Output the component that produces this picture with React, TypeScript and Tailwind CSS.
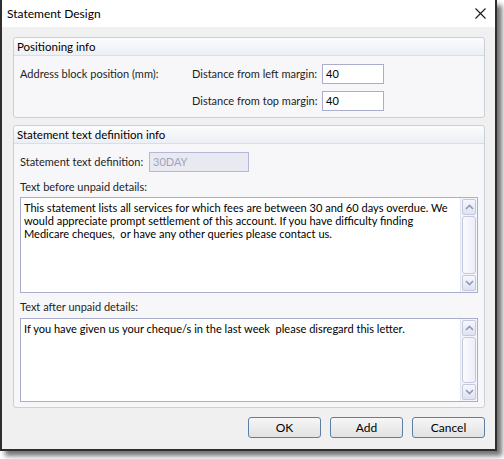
import React from 'react';

const font = { fontFamily: 'Lato, "Liberation Sans", sans-serif' };

const ScrollBar: React.FC = () => (
  <div className="w-[17px] shrink-0 flex flex-col bg-[#f4f5fa] border-l border-[#e3e5f0]">
    <div className="h-[16px] m-[1px] mb-0 rounded-[2px] border border-[#c3c8df] bg-gradient-to-b from-[#f7f8fc] to-[#dfe2ef] flex items-center justify-center">
      <svg width="9" height="6" viewBox="0 0 9 6">
        <path d="M1 5 L4.5 1.5 L8 5" fill="none" stroke="#8f98bd" strokeWidth="1.6" />
      </svg>
    </div>
    <div className="flex-1 mx-[1px] my-[1px] rounded-[3px] border border-[#c3c8df] bg-gradient-to-r from-[#fbfbfe] to-[#eceef7]" />
    <div className="h-[16px] m-[1px] mt-0 rounded-[2px] border border-[#c3c8df] bg-gradient-to-b from-[#f7f8fc] to-[#dfe2ef] flex items-center justify-center">
      <svg width="9" height="6" viewBox="0 0 9 6">
        <path d="M1 1 L4.5 4.5 L8 1" fill="none" stroke="#8f98bd" strokeWidth="1.6" />
      </svg>
    </div>
  </div>
);

const MemoBox: React.FC<{ lines: string[]; height: string }> = ({ lines, height }) => (
  <div className={`flex border border-[#abadcf] bg-white ${height}`}>
    <div className="flex-1 min-w-0 overflow-hidden pl-[3px] pt-[3px] text-[11.05px] leading-[13px] text-black">
      {lines.map((l, i) => (
        <div key={i} className="whitespace-pre">{l}</div>
      ))}
    </div>
    <ScrollBar />
  </div>
);

const GroupBox: React.FC<{ title: string; children: React.ReactNode }> = ({ title, children }) => (
  <div className="rounded-[3px] border border-[#c9d0dc] bg-[#f7f7f9]">
    <div className="h-[18px] flex items-center pl-[3px] border-b border-[#d9dee6] rounded-t-[3px] bg-gradient-to-b from-[#fbfcfd] to-[#eceff4] text-[11.5px] text-black whitespace-nowrap">
      {title}
    </div>
    {children}
  </div>
);

const Button: React.FC<{ label: string }> = ({ label }) => (
  <button className="w-[73px] h-[21px] rounded-[3px] border border-[#5f7ea6] bg-gradient-to-b from-[#f6f6f6] to-[#e2e2e2] text-[12px] text-black leading-none">
    {label}
  </button>
);

export default function App() {
  return (
    <div className="w-[504px] h-[459px] bg-white" style={font}>
      <div className="w-[497px] h-[451px] flex flex-col border-x-2 border-b-2 border-[#2e2e2e] bg-[#f0f0f0] shadow-[5px_5px_5px_rgba(0,0,0,0.55)]">
        {/* Title bar */}
        <div className="h-[27px] bg-white flex items-center justify-between pl-[5px] pr-[9px]">
          <span className="text-[12px] text-black">Statement Design</span>
          <svg width="11" height="11" viewBox="0 0 11 11">
            <path d="M0.5 0.5 L10.5 10.5 M10.5 0.5 L0.5 10.5" stroke="#1a1a1a" strokeWidth="1.1" />
          </svg>
        </div>

        <div className="flex-1 flex flex-col pl-[11px] pr-[10px] pt-[10px]">
          <GroupBox title="Positioning info">
            <div className="px-[6px] pt-[8px] pb-[6px] text-[11px] text-[#1e1e1e] whitespace-nowrap">
              <div className="flex items-center h-[20px]">
                <span className="w-[172px]">Address block position (mm):</span>
                <span className="w-[130px]">Distance from left margin:</span>
                <div className="w-[62px] h-[20px] border border-[#abadcf] bg-white pl-[3px] leading-[18px] text-black">40</div>
              </div>
              <div className="flex items-center h-[20px] mt-[7px]">
                <span className="w-[172px]" />
                <span className="w-[130px]">Distance from top margin:</span>
                <div className="w-[62px] h-[20px] border border-[#abadcf] bg-white pl-[3px] leading-[18px] text-black">40</div>
              </div>
            </div>
          </GroupBox>

          <div className="mt-[7px]">
            <GroupBox title="Statement text definition info">
              <div className="px-[6px] pt-[8px] pb-[5px] text-[11px] text-[#1e1e1e] whitespace-nowrap">
                <div className="flex items-center h-[20px]">
                  <span className="w-[129px]">Statement text definition:</span>
                  <div className="w-[100px] h-[20px] border border-[#b4b7d6] bg-[#e9eaf1] pl-[3px] leading-[18px] text-[#9fa3bf]">30DAY</div>
                </div>
                <div className="mt-[7px] h-[16px] leading-[16px]">Text before unpaid details:</div>
                <div className="mt-[2px]">
                  <MemoBox
                    height="h-[96px]"
                    lines={[
                      'This statement lists all services for which fees are between 30 and 60 days overdue. We',
                      'would appreciate prompt settlement of this account. If you have difficulty finding',
                      'Medicare cheques,  or have any other queries please contact us.',
                    ]}
                  />
                </div>
                <div className="mt-[6px] h-[16px] leading-[16px]">Text after unpaid details:</div>
                <div className="mt-[3px]">
                  <MemoBox
                    height="h-[84px]"
                    lines={['If you have given us your cheque/s in the last week  please disregard this letter.']}
                  />
                </div>
              </div>
            </GroupBox>
          </div>

          <div className="mt-[9px] flex justify-end gap-[9px] pr-[0px]">
            <Button label="OK" />
            <Button label="Add" />
            <Button label="Cancel" />
          </div>
        </div>
      </div>
    </div>
  );
}
